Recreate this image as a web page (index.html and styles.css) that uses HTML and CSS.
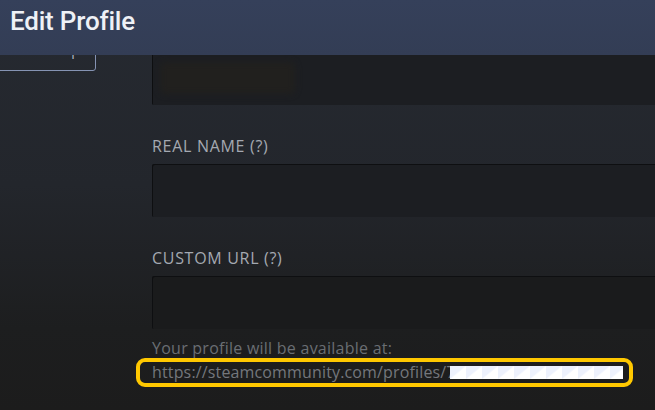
FILE: index.html
```html
<!DOCTYPE html>
<html lang="en">
<head>
<meta charset="utf-8">
<title>Edit Profile</title>
<link rel="stylesheet" href="styles.css">
</head>
<body>
<header class="topbar">
  <h1 class="title">Edit Profile</h1>
</header>
<div class="page">
  <aside class="sidebar">
    <button class="shop-btn" type="button">Points Shop</button>
  </aside>
  <main class="form">
    <div class="field first">
      <div class="input"><span class="blur"></span></div>
    </div>
    <div class="field">
      <div class="label">REAL NAME (?)</div>
      <div class="input"></div>
    </div>
    <div class="field">
      <div class="label">CUSTOM URL (?)</div>
      <div class="input input-dark"></div>
    </div>
    <div class="hint">Your profile will be available at:</div>
    <div class="url-box">
      <span class="url">https://steamcommunity.com/profiles/7</span><span class="redact"></span>
    </div>
  </main>
</div>
</body>
</html>
```
FILE: styles.css
```css
html, body {
  margin: 0;
  padding: 0;
  width: 655px;
  height: 410px;
  overflow: hidden;
}
body {
  background: linear-gradient(180deg, #262a31 0%, #23262c 45%, #1d1e1f 80%, #1c1c1c 100%);
  font-family: "Open Sans", "Noto Sans", sans-serif;
  position: relative;
}
.topbar {
  position: absolute;
  top: 0;
  left: 0;
  right: 0;
  height: 55px;
  background: linear-gradient(180deg, #35405a 0%, #333d55 100%);
  z-index: 2;
  display: flex;
  align-items: center;
}
.title {
  margin: 0 0 0 10px;
  font-family: Roboto, "Liberation Sans", sans-serif;
  font-weight: 500;
  font-size: 26px;
  color: #eef1f6;
  line-height: 1;
  padding-bottom: 14px;
  letter-spacing: -0.2px;
}
.page {
  display: grid;
  grid-template-columns: 96px 1fr;
  column-gap: 56px;
}
.sidebar {
  padding-top: 33px;
}
.shop-btn {
  display: block;
  margin-left: -14px;
  width: 110px;
  height: 38px;
  border: 1px solid #8593b3;
  border-radius: 3px;
  background: transparent;
  color: #aeb6c6;
  font-family: "Open Sans", sans-serif;
  font-size: 14px;
  padding: 0 0 5px 0;
}
.form {
  width: 560px;
  padding-top: 52px;
}
.field {
  margin-bottom: 32px;
}
.label {
  font-size: 16px;
  line-height: 18px;
  color: #a4a9b1;
  margin-bottom: 9px;
  letter-spacing: 0.7px;
}
.input {
  height: 53px;
  background: #1c1e22;
  box-shadow: inset 1px 1px 0 #0e0f11;
  border-radius: 2px;
  position: relative;
}
.input-dark {
  background: #1a1b1c;
}
.blur {
  position: absolute;
  left: 8px;
  top: 10px;
  width: 135px;
  height: 32px;
  background: #21201e;
  border-radius: 6px;
  filter: blur(3px);
}
.hint {
  margin-top: -25px;
  font-size: 16px;
  line-height: 24px;
  color: #6a6e73;
  letter-spacing: 0.25px;
}
.url-box {
  margin-left: -16px;
  width: 477px;
  height: 21px;
  border: 4px solid #ffc800;
  border-radius: 9px;
  padding-left: 12px;
  display: flex;
  align-items: center;
  margin-top: -2px;
}
.url {
  font-size: 16px;
  line-height: 21px;
  color: #74777c;
  white-space: nowrap;
  letter-spacing: 0.15px;
}
.redact {
  display: inline-block;
  flex: none;
  width: 173px;
  height: 13px;
  margin-left: -6px;
  background: linear-gradient(to bottom right, #edf1fc 0 46%, #ffffff 54%);
  background-size: 16px 13px;
  background-color: #fff;
}
```
